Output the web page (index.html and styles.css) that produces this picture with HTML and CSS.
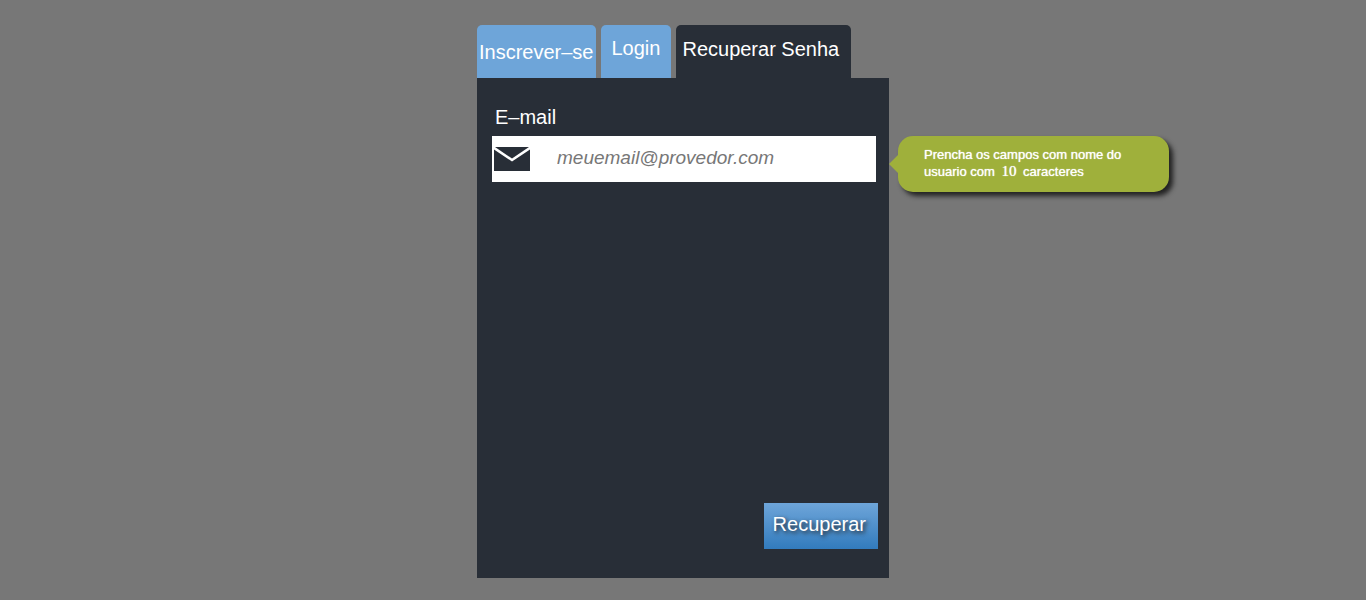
FILE: index.html
```html
<!DOCTYPE html>
<html lang="pt-BR">
<head>
<meta charset="utf-8">
<meta name="viewport" content="width=device-width, initial-scale=1">
<title>Recuperar Senha</title>
<link rel="stylesheet" href="styles.css">
</head>
<body>
<main class="account">
  <nav class="tabs">
    <a class="tab tab-signup" href="#inscrever">Inscrever–se</a>
    <a class="tab tab-login" href="#login">Login</a>
    <a class="tab tab-active" href="#recuperar" aria-current="page">Recuperar Senha</a>
  </nav>
  <form class="panel">
    <label class="label" for="email">E–mail</label>
    <div class="field">
      <svg class="mail-icon" viewBox="0 0 36 24" aria-hidden="true">
        <path d="M0 2.5 18 14.5 36 2.5V24H0Z" fill="#282e37"/>
        <path d="M1 0H35L18 11.5Z" fill="#282e37"/>
      </svg>
      <input class="input" id="email" type="email" placeholder="meuemail@provedor.com" aria-describedby="hint">
      <div class="hint" id="hint" role="tooltip">Prencha os campos com nome do usuario com <span class="number">10</span> caracteres</div>
    </div>
    <button class="submit" type="submit">Recuperar</button>
  </form>
</main>
</body>
</html>
```
FILE: styles.css
```css
* {
  box-sizing: border-box;
}

body {
  margin: 0;
  min-height: 100vh;
  background: #777;
  color: #fff;
  font-family: "Liberation Sans", Arial, sans-serif;
  font-size: 20px;
  line-height: 24px;
}

.account {
  width: 100%;
  max-width: 412px;
  margin: 0 auto;
  padding-top: 25px;
}

.tabs {
  display: flex;
  gap: 5px;
}

.tab {
  padding: 11px 11px 18px;
  border-radius: 5px 5px 0 0;
  background: #6ea5d9;
  color: #fff;
  text-decoration: none;
  white-space: nowrap;
}

.tab-signup {
  padding: 15px 2px 14px;
}

.tab-active {
  padding: 12px 12px 17px 6px;
  background: #282e37;
}

.panel {
  display: flex;
  flex-direction: column;
  min-height: 500px;
  padding: 27px 11px 29px 15px;
  background: #282e37;
}

.label {
  margin-left: 3px;
}

.field {
  position: relative;
  display: flex;
  align-items: center;
  height: 46px;
  margin: 7px 2px 0 0;
  padding-left: 2px;
  background: #fff;
}

.mail-icon {
  flex: none;
  width: 36px;
  height: 24px;
}

.input {
  flex: 1;
  min-width: 0;
  height: 100%;
  padding: 0 10px 2px 27px;
  border: 0;
  background: transparent;
  color: #282e37;
  font: italic 19px "Liberation Sans", Arial, sans-serif;
}

.input::placeholder {
  color: #777;
  opacity: 1;
}

.hint {
  position: absolute;
  top: 0;
  left: calc(100% + 22px);
  width: 271px;
  padding: 10px 30px 12px 26px;
  border-radius: 15px;
  background: #9fb03b;
  box-shadow: 4px 4px 5px #222;
  font-size: 13px;
  line-height: 17px;
  text-shadow: 0 0 1px #fff;
}

.hint::before {
  content: "";
  position: absolute;
  top: 19px;
  left: -9px;
  border: solid transparent;
  border-width: 9px 9px 9px 0;
  border-right-color: #9fb03b;
}

.number {
  margin: 0 3px;
  font-family: "Liberation Serif", "Times New Roman", serif;
  font-size: 15px;
  line-height: 1;
}

.submit {
  align-self: flex-end;
  height: 46px;
  margin-top: auto;
  padding: 0 12px 4px 9px;
  border: 0;
  background: linear-gradient(#6ea5d9, #327bbd);
  color: #fff;
  font: 20px "Liberation Sans", Arial, sans-serif;
  text-shadow: 2px 2px 4px #222;
  cursor: pointer;
}
```
